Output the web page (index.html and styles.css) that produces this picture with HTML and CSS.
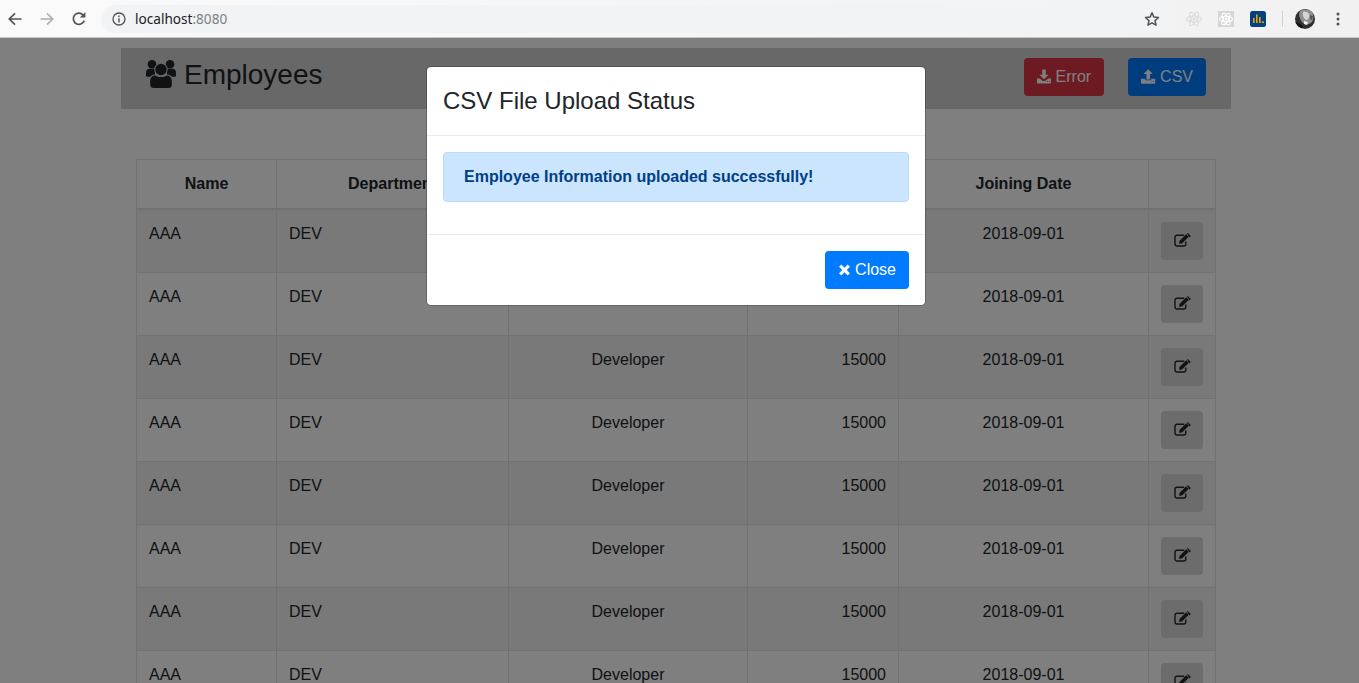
FILE: index.html
```html
<!DOCTYPE html>
<html lang="en">
<head>
<meta charset="utf-8">
<title>Employees</title>
<link rel="stylesheet" href="styles.css">
</head>
<body>
<svg class="defs" width="0" height="0" aria-hidden="true">
  <symbol id="i-download" viewBox="0 0 16 16"><path d="M6 0h4v6h3.2L8 11.2 2.8 6H6z"/><path d="M0 10.3h3.2L6.6 13h2.8l3.4-2.7H16V15a.9.9 0 0 1-.9.9H.9A.9.9 0 0 1 0 15zM11.6 13.2v1h1v-1zM13.6 13.2v1h1v-1z" fill-rule="evenodd"/></symbol>
  <symbol id="i-upload" viewBox="0 0 16 16"><path d="M8 0l5.2 5.2H10v6H6v-6H2.8z"/><path d="M0 10.6h4.800v1.400h6.400v-1.400H16V15a.9.9 0 0 1-.9.9H.9A.9.9 0 0 1 0 15zM11.600 13.200v1h1v-1zM13.600 13.200v1h1v-1z" fill-rule="evenodd"/></symbol>
  <symbol id="i-edit" viewBox="0 0 17 14"><path d="M11.800 8.500V11a2 2 0 0 1-2 2H3a2 2 0 0 1-2-2V4.200a2 2 0 0 1 2-2h7.200" fill="none" stroke="currentColor" stroke-width="1.400"/><path d="M5 10.800l.5-2.900L12.200 1.200l2.600 2.600-6.800 6.600z"/><path d="M13 .5l.7-.5 2.900 2.700-.1.7-1 1z"/></symbol>
</svg>

<header class="chrome">
  <div class="nav">
    <svg class="nav-ico" viewBox="0 0 16 16"><path d="M14.500 8H2.500M8 2.400 2.300 8 8 13.600" fill="none" stroke="#505356" stroke-width="1.700"/></svg>
    <svg class="nav-ico" viewBox="0 0 16 16"><path d="M1.500 8h12M8 2.400 13.700 8 8 13.600" fill="none" stroke="#aeb0b2" stroke-width="1.700"/></svg>
    <svg class="nav-ico" viewBox="0 0 16 16"><path d="M13.200 9.600A5.600 5.600 0 1 1 12 3.900" fill="none" stroke="#505356" stroke-width="1.700"/><path d="M14.400.9v5.600H8.800z" fill="#505356"/></svg>
  </div>
  <div class="omnibox">
    <svg class="info" viewBox="0 0 14 14"><circle cx="7" cy="7" r="6" fill="none" stroke="#505356" stroke-width="1.300"/><path d="M6.300 6.200h1.400v4.300H6.300zM6.300 3.500h1.400v1.400H6.300z" fill="#505356"/></svg>
    <span class="url">localhost<span class="port">:8080</span></span>
    <svg class="star" viewBox="0 0 16 16"><path d="M8 1.800l1.900 4.300 4.600.4-3.500 3.100 1 4.600L8 11.800l-4 2.400 1-4.600-3.500-3.100 4.600-.4z" fill="none" stroke="#505356" stroke-width="1.500" stroke-linejoin="round"/></svg>
  </div>
  <div class="exts">
    <svg class="ext" viewBox="0 0 16 16"><g fill="none" stroke="#dcdcdc" stroke-width="1.100"><ellipse cx="8" cy="8" rx="7.500" ry="3"/><ellipse cx="8" cy="8" rx="7.500" ry="3" transform="rotate(60 8 8)"/><ellipse cx="8" cy="8" rx="7.500" ry="3" transform="rotate(120 8 8)"/></g><circle cx="8" cy="8" r="1.600" fill="#dcdcdc"/></svg>
    <svg class="ext" viewBox="0 0 16 16"><rect width="16" height="16" fill="#d5d5d5"/><g fill="none" stroke="#fff" stroke-width="1.100"><ellipse cx="8" cy="8" rx="6.500" ry="2.700"/><ellipse cx="8" cy="8" rx="6.500" ry="2.700" transform="rotate(60 8 8)"/><ellipse cx="8" cy="8" rx="6.500" ry="2.700" transform="rotate(120 8 8)"/></g><circle cx="8" cy="8" r="1.500" fill="#fff"/></svg>
    <svg class="ext" viewBox="0 0 16 16"><rect width="16" height="16" rx="2.500" fill="#04417f"/><path d="M3 7h1.600v5H3zM6 3.500h1.600V12H6zM9 6h1.600v6H9zM11.700 10.600H14V12h-2.300z" fill="#f29d0e"/></svg>
    <span class="divider"></span>
    <svg class="avatar" viewBox="0 0 20 20"><defs><clipPath id="av"><circle cx="10" cy="10" r="10"/></clipPath></defs><g clip-path="url(#av)"><rect width="20" height="20" fill="#2f2f2f"/><path d="M5 2c3-2 9-2 12 1 2 3 2 8-1 11-3 2-7 2-9-1C5 10 3 6 5 2z" fill="#8f8f8f"/><path d="M8 3c2-1 5 0 6 2 1 3-1 6-3 6-2-1-4-5-3-8z" fill="#d4d4d4"/><path d="M9 12l4 1-1 3-3-1z" fill="#f0f0f0"/><path d="M15 6l3 1-1 4-2-1z" fill="#555"/><path d="M0 13c3 1 6 2 8 5l-2 2H0z" fill="#111"/></g></svg>
    <svg class="dots" viewBox="0 0 4 16"><circle cx="2" cy="3" r="1.500"/><circle cx="2" cy="8" r="1.500"/><circle cx="2" cy="13" r="1.500"/></svg>
  </div>
</header>

<div class="viewport">
  <main class="page">
    <div class="container">
      <div class="topbar">
        <h3 class="title">
          <svg class="users" viewBox="0 0 30 28">
            <circle cx="6" cy="4.300" r="4.300"/><circle cx="24" cy="4.300" r="4.300"/>
            <path d="M0 16v-3.500C0 10 1.500 8.800 3.500 8.800H9v8H1.500A1.500 1.500 0 0 1 0 16zM30 16v-3.500c0-2.500-1.500-3.700-3.500-3.700H21v8h7.500A1.500 1.500 0 0 0 30 16z"/>
            <circle class="gap" cx="15" cy="9.500" r="6.700"/>
            <path class="gap" d="M3 28v-7c0-4 2.500-6.500 6-6.500h12c3.500 0 6 2.500 6 6.500v7z"/>
            <circle cx="15" cy="9.500" r="5.700"/>
            <path d="M4.200 24.500V21c0-3.500 2.500-5.500 5-5.500 1.500 1 3.500 1.600 5.800 1.600s4.300-.6 5.800-1.600c2.500 0 5 2 5 5.500v3.500a3.500 3.500 0 0 1-3.500 3.500H7.700a3.500 3.500 0 0 1-3.500-3.500z"/>
          </svg>
          Employees
        </h3>
        <div class="actions">
          <button class="btn btn-danger"><svg class="ico"><use href="#i-download"/></svg> Error</button>
          <button class="btn btn-primary"><svg class="ico"><use href="#i-upload"/></svg> CSV</button>
        </div>
      </div>

      <table class="grid">
        <thead>
          <tr>
            <th class="c-name">Name</th>
            <th class="c-dept">Department</th>
            <th class="c-role"></th>
            <th class="c-sal"></th>
            <th class="c-date">Joining Date</th>
            <th class="c-act"></th>
          </tr>
        </thead>
        <tbody>
          <tr><td>AAA</td><td>DEV</td><td class="mid">Developer</td><td class="end">15000</td><td class="mid">2018-09-01</td><td><button class="btn btn-edit"><svg class="ico-edit"><use href="#i-edit"/></svg></button></td></tr>
          <tr><td>AAA</td><td>DEV</td><td class="mid">Developer</td><td class="end">15000</td><td class="mid">2018-09-01</td><td><button class="btn btn-edit"><svg class="ico-edit"><use href="#i-edit"/></svg></button></td></tr>
          <tr><td>AAA</td><td>DEV</td><td class="mid">Developer</td><td class="end">15000</td><td class="mid">2018-09-01</td><td><button class="btn btn-edit"><svg class="ico-edit"><use href="#i-edit"/></svg></button></td></tr>
          <tr><td>AAA</td><td>DEV</td><td class="mid">Developer</td><td class="end">15000</td><td class="mid">2018-09-01</td><td><button class="btn btn-edit"><svg class="ico-edit"><use href="#i-edit"/></svg></button></td></tr>
          <tr><td>AAA</td><td>DEV</td><td class="mid">Developer</td><td class="end">15000</td><td class="mid">2018-09-01</td><td><button class="btn btn-edit"><svg class="ico-edit"><use href="#i-edit"/></svg></button></td></tr>
          <tr><td>AAA</td><td>DEV</td><td class="mid">Developer</td><td class="end">15000</td><td class="mid">2018-09-01</td><td><button class="btn btn-edit"><svg class="ico-edit"><use href="#i-edit"/></svg></button></td></tr>
          <tr><td>AAA</td><td>DEV</td><td class="mid">Developer</td><td class="end">15000</td><td class="mid">2018-09-01</td><td><button class="btn btn-edit"><svg class="ico-edit"><use href="#i-edit"/></svg></button></td></tr>
          <tr><td>AAA</td><td>DEV</td><td class="mid">Developer</td><td class="end">15000</td><td class="mid">2018-09-01</td><td><button class="btn btn-edit"><svg class="ico-edit"><use href="#i-edit"/></svg></button></td></tr>
        </tbody>
      </table>
    </div>
  </main>

  <div class="backdrop"></div>

  <section class="modal">
    <div class="modal-header"><h5 class="modal-title">CSV File Upload Status</h5></div>
    <div class="modal-body">
      <div class="alert"><strong>Employee Information uploaded successfully!</strong></div>
    </div>
    <div class="modal-footer">
      <button class="btn btn-primary">
        <svg class="ico-x" viewBox="0 0 13 13"><path d="M4.100 6.500.6 3 3 .6l3.500 3.500L10 .6 12.400 3 8.900 6.500l3.500 3.500L10 12.400 6.500 8.900 3 12.400.6 10z" fill="currentColor"/></svg>
        Close
      </button>
    </div>
  </section>
</div>
</body>
</html>
```

FILE: styles.css
```css
* { box-sizing: border-box; }

html, body {
  margin: 0;
  height: 100%;
  overflow: hidden;
}

body {
  display: flex;
  flex-direction: column;
  background: #fff;
  color: #212529;
  font: 16px/24px "Liberation Sans", Arial, sans-serif;
}

.defs { position: absolute; }

/* Browser chrome */
.chrome {
  flex: none;
  display: flex;
  align-items: center;
  height: 38px;
  background: linear-gradient(90deg, #fafafa, #f1f1f1);
  border-bottom: 1px solid #c8c8c8;
}

.nav {
  display: flex;
  gap: 16px;
  padding: 0 0 0 7px;
}

.nav-ico { width: 16px; height: 16px; }

.omnibox {
  display: flex;
  align-items: center;
  width: 1067px;
  height: 28px;
  margin-left: 14px;
  padding: 0 8px 0 11px;
  background: #f1f3f4;
  border-radius: 14px;
}

.info { width: 14px; height: 14px; }

.url {
  flex: 1;
  margin-left: 9px;
  font: 13.6px/20px "Noto Sans", sans-serif;
  color: #202124;
}

.port { color: #7b8086; }

.star { width: 16px; height: 16px; }

.exts {
  display: flex;
  align-items: center;
  margin-left: 18px;
}

.ext { width: 16px; height: 16px; margin-right: 16px; }

.divider {
  width: 1px;
  height: 16px;
  margin: 0 12px 0 0;
  background: #d0d0d0;
}

.avatar { width: 20px; height: 20px; }

.dots {
  width: 4px;
  height: 16px;
  margin-left: 21px;
  fill: #505356;
}

/* Page beneath the modal */
.viewport {
  position: relative;
  flex: 1;
  overflow: hidden;
}

.page { width: 1352px; }

.container {
  width: 1110px;
  margin: 0 auto;
  padding-top: 10px;
}

.topbar {
  display: flex;
  justify-content: space-between;
  height: 61px;
  padding: 10px 25px;
  background: #d0d0d0;
}

.title {
  display: flex;
  align-items: flex-start;
  gap: 8px;
  margin: 0;
  font-size: 28px;
  font-weight: 400;
  line-height: 34px;
}

.users {
  width: 30px;
  height: 28px;
  margin-top: 2px;
  fill: #212529;
}

.users .gap { fill: #d0d0d0; }

.actions { display: flex; gap: 24px; }

.btn {
  display: inline-block;
  height: 38px;
  padding: 6px 12px;
  border: 1px solid transparent;
  border-radius: 4px;
  font: inherit;
  color: #fff;
}

.btn-primary { background: #007bff; }
.btn-danger { background: #dc3545; }

.ico {
  width: 14.5px;
  height: 15px;
  vertical-align: -2px;
  fill: currentColor;
}

.btn-danger .ico { width: 14px; }

.ico-x {
  width: 13px;
  height: 12px;
  vertical-align: -1px;
}

/* Table */
.grid {
  width: 1079px;
  margin: 50px 15px 0;
  border-collapse: collapse;
  table-layout: fixed;
  background: #fff;
}

.grid th,
.grid td {
  padding: 12px;
  border: 1px solid #dee2e6;
  vertical-align: top;
}

.grid th {
  border-bottom-width: 2px;
  text-align: center;
  font-weight: 700;
}

.c-name { width: 140px; }
.c-dept { width: 232px; }
.c-role { width: 239px; }
.c-sal { width: 151px; }
.c-date { width: 250px; }
.c-act { width: 67px; }

.grid tbody tr:nth-child(odd) { background: #f2f2f2; }

.mid { text-align: center; }
.end { text-align: right; }

.btn-edit {
  display: block;
  width: 42px;
  background: #d8d8d8;
  color: #212529;
  padding: 0 0 3px;
}

.ico-edit {
  display: block;
  width: 17px;
  height: 14px;
  margin: 0 auto;
  fill: currentColor;
  color: #212529;
}

/* Overlay */
.backdrop {
  position: absolute;
  inset: 0;
  background: rgba(0, 0, 0, .5);
}

.modal {
  position: absolute;
  top: 28px;
  left: 426px;
  width: 500px;
  background: #fff;
  border: 1px solid rgba(0, 0, 0, .2);
  border-radius: 5px;
  background-clip: padding-box;
}

.modal-header {
  padding: 16px;
  border-bottom: 1px solid #e9ecef;
}

.modal-title {
  margin: 0;
  font-size: 24px;
  font-weight: 400;
  line-height: 36px;
}

.modal-body { padding: 16px; }

.alert {
  margin-bottom: 16px;
  padding: 12px 20px;
  background: #cce5ff;
  border: 1px solid #b8daff;
  border-radius: 4px;
  color: #004085;
}

.modal-footer {
  display: flex;
  justify-content: flex-end;
  padding: 16px;
  border-top: 1px solid #e9ecef;
}
```
